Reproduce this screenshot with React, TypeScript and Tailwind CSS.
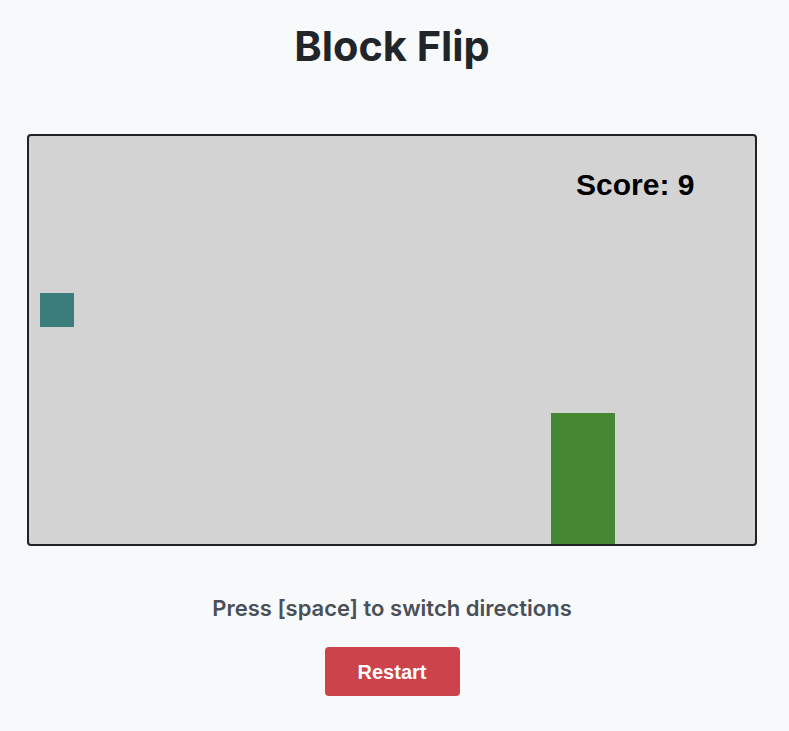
import React from "react";

export default function App() {
  return (
    <div className="min-h-[731px] bg-[#f8f9fa]">
      <div className="w-[784px] flex flex-col items-center pt-[21px]">
        <h1 className="text-[41.5px] leading-[50px] font-bold text-[#212529] font-['Inter',sans-serif]">
          Block Flip
        </h1>
        <div className="mt-[63px] relative w-[730px] h-[412px] border-2 border-[#222222] rounded-[4px] bg-[#d3d3d3] overflow-hidden">
          <div className="absolute left-[11px] top-[157px] w-[34px] h-[34px] bg-[#3a7d7a]" />
          <div className="absolute left-[522px] top-[277px] w-[64px] h-[133px] bg-[#468733]" />
          <div className="absolute left-[547px] top-[31px] text-[30px] leading-[36px] font-bold text-black font-['Liberation_Sans',Arial,sans-serif]">
            Score: 9
          </div>
        </div>
        <p className="mt-[47px] text-[22px] leading-[30px] font-semibold text-[#495057] font-['Inter',sans-serif]">
          Press [space] to switch directions
        </p>
        <button className="mt-[24px] w-[135px] h-[49px] rounded-[4px] bg-[#cd434b] text-white text-[20px] font-bold font-['Liberation_Sans',Arial,sans-serif]">
          Restart
        </button>
      </div>
    </div>
  );
}
